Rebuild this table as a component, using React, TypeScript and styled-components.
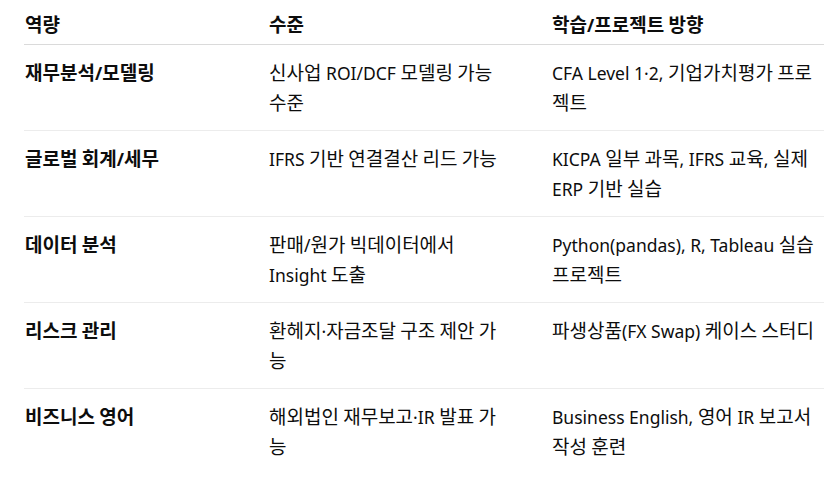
import React from 'react';
import styled, { createGlobalStyle } from 'styled-components';

const GlobalStyle = createGlobalStyle`
  html, body {
    margin: 0;
    padding: 0;
    background: #ffffff;
  }
  body {
    font-family: 'Noto Sans', 'Noto Sans CJK KR', sans-serif;
    color: #0d0d0d;
    -webkit-font-smoothing: antialiased;
  }
`;

const ROWS = [
  {
    skill: '재무분석/모델링',
    level: '신사업 ROI/DCF 모델링 가능 수준',
    plan: 'CFA Level 1·2, 기업가치평가 프로젝트',
  },
  {
    skill: '글로벌 회계/세무',
    level: 'IFRS 기반 연결결산 리드 가능',
    plan: 'KICPA 일부 과목, IFRS 교육, 실제 ERP 기반 실습',
  },
  {
    skill: '데이터 분석',
    level: '판매/원가 빅데이터에서 Insight 도출',
    plan: 'Python(pandas), R, Tableau 실습 프로젝트',
  },
  {
    skill: '리스크 관리',
    level: '환헤지·자금조달 구조 제안 가능',
    plan: '파생상품(FX Swap) 케이스 스터디',
  },
  {
    skill: '비즈니스 영어',
    level: '해외법인 재무보고·IR 발표 가능',
    plan: 'Business English, 영어 IR 보고서 작성 훈련',
  },
];

const Page = styled.div`
  padding: 0 13px 0 24px;
`;

const Table = styled.div`
  width: 800px;
  font-size: 17.5px;
  line-height: 30px;
`;

const Row = styled.div<{ $head?: boolean; $last?: boolean }>`
  display: grid;
  grid-template-columns: 245px 283px 272px;
  padding: ${p => (p.$head ? '10px 0 4px' : '13px 0 12px')};
  border-bottom: ${p =>
    p.$last ? 'none' : p.$head ? '1px solid #dadada' : '1px solid #ececec'};
`;

const Cell = styled.div<{ $col: number; $bold?: boolean }>`
  padding-left: ${p => (p.$col === 0 ? '1px' : '0')};
  padding-right: ${p => (p.$col === 0 ? '16px' : p.$col === 1 ? '42px' : '0')};
  font-weight: ${p => (p.$bold ? 700 : 400)};
`;

// hangul glyphs in the reference font run a bit larger than the latin ones
const Ko = styled.span`
  font-family: 'Noto Sans CJK KR', sans-serif;
  font-size: 19px;
  line-height: 1;
`;

const HANGUL = /([\uAC00-\uD7A3]+(?:\s+[\uAC00-\uD7A3]+)*)/;

function Text({ children }: { children: string }) {
  return (
    <>
      {children.split(HANGUL).map((part, i) =>
        i % 2 === 1 ? <Ko key={i}>{part}</Ko> : part,
      )}
    </>
  );
}

export default function App() {
  return (
    <Page>
      <GlobalStyle />
      <Table>
        <Row $head>
          <Cell $col={0} $bold><Text>역량</Text></Cell>
          <Cell $col={1} $bold><Text>수준</Text></Cell>
          <Cell $col={2} $bold><Text>학습/프로젝트 방향</Text></Cell>
        </Row>
        {ROWS.map((row, index) => (
          <Row key={row.skill} $last={index === ROWS.length - 1}>
            <Cell $col={0} $bold><Text>{row.skill}</Text></Cell>
            <Cell $col={1}><Text>{row.level}</Text></Cell>
            <Cell $col={2}><Text>{row.plan}</Text></Cell>
          </Row>
        ))}
      </Table>
    </Page>
  );
}
